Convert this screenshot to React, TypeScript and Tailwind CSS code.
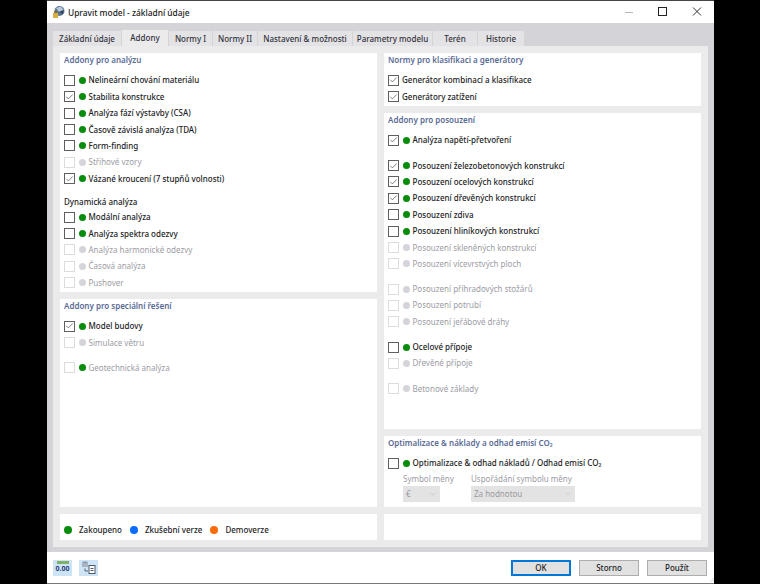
import { Check, ChevronDown } from 'lucide-react'

type Row = {
  label: React.ReactNode
  checked?: boolean
  off?: boolean
  dot?: 'green' | 'gray'
  gap?: boolean
}

const analysis: Row[] = [
  { label: 'Nelineární chování materiálu' },
  { label: 'Stabilita konstrukce', checked: true },
  { label: 'Analýza fází výstavby (CSA)' },
  { label: 'Časově závislá analýza (TDA)' },
  { label: 'Form-finding' },
  { label: 'Střihové vzory', off: true },
  { label: 'Vázané kroucení (7 stupňů volnosti)', checked: true },
]

const dynamic: Row[] = [
  { label: 'Modální analýza' },
  { label: 'Analýza spektra odezvy' },
  { label: 'Analýza harmonické odezvy', off: true },
  { label: 'Časová analýza', off: true },
  { label: 'Pushover', off: true },
]

const special: Row[] = [
  { label: 'Model budovy', checked: true },
  { label: 'Simulace větru', off: true },
  { label: 'Geotechnická analýza', off: true, dot: 'green', gap: true },
]

const design: Row[] = [
  { label: 'Analýza napětí-přetvoření', checked: true },
  { label: 'Posouzení železobetonových konstrukcí', checked: true, gap: true },
  { label: 'Posouzení ocelových konstrukcí', checked: true },
  { label: 'Posouzení dřevěných konstrukcí', checked: true },
  { label: 'Posouzení zdiva' },
  { label: 'Posouzení hliníkových konstrukcí' },
  { label: 'Posouzení skleněných konstrukcí', off: true },
  { label: 'Posouzení vícevrstvých ploch', off: true },
  { label: 'Posouzení příhradových stožárů', off: true, gap: true },
  { label: 'Posouzení potrubí', off: true },
  { label: 'Posouzení jeřábové dráhy', off: true },
  { label: 'Ocelové přípoje', gap: true },
  { label: 'Dřevěné přípoje', off: true },
  { label: 'Betonové základy', off: true, gap: true },
]

const tabs = [
  { label: 'Základní údaje', width: 'w-[68px]' },
  { label: 'Addony', width: 'w-[46px]', active: true },
  { label: 'Normy I', width: 'w-[43px]' },
  { label: 'Normy II', width: 'w-[44px]' },
  { label: 'Nastavení & možnosti', width: 'w-[94px]' },
  { label: 'Parametry modelu', width: 'w-[79px]' },
  { label: 'Terén', width: 'w-[44px]' },
  { label: 'Historie', width: 'w-[46px]' },
]

function CheckBox({ checked, off }: { checked?: boolean; off?: boolean }) {
  return (
    <span
      className={`flex h-[11px] w-[11px] shrink-0 items-center justify-center border bg-white ${
        off ? 'border-[#dcdcdc]' : 'border-[#5f5f5f]'
      }`}
    >
      {checked && <Check className="h-[10px] w-[10px] text-[#444]" strokeWidth={1.8} />}
    </span>
  )
}

function AddonRow({ row }: { row: Row }) {
  const dot = row.dot ?? (row.off ? 'gray' : 'green')
  return (
    <div className={`flex h-[16.4px] items-center ${row.gap ? 'mt-[8.8px]' : ''}`}>
      <CheckBox checked={row.checked} off={row.off} />
      <span
        className={`ml-[3.5px] h-[7px] w-[7px] shrink-0 rounded-full ${
          dot === 'green' ? 'bg-[#078c0c]' : 'bg-[#d4d4da]'
        }`}
      />
      <span className={`ml-[3px] whitespace-nowrap ${row.off ? 'text-[#9c9ca4]' : 'font-medium text-[#1c1c24]'}`}>
        {row.label}
      </span>
    </div>
  )
}

function CheckRow({ label }: { label: string }) {
  return (
    <div className="flex h-[16.4px] items-center">
      <CheckBox checked />
      <span className="ml-[3px] whitespace-nowrap font-medium text-[#1c1c24]">{label}</span>
    </div>
  )
}

function Heading({ children }: { children: React.ReactNode }) {
  return <div className="mb-[6.2px] h-[13px] font-semibold leading-[13px] text-[#5a6b96]">{children}</div>
}

function Card({ className, children }: { className?: string; children?: React.ReactNode }) {
  return <div className={`bg-white px-[4px] ${className ?? ''}`}>{children}</div>
}

function Select({ value, className }: { value: string; className: string }) {
  return (
    <div className={`flex h-[16px] items-center justify-between bg-[#e3e3e3] pl-[3px] pr-[2px] text-[#9a9aa0] ${className}`}>
      <span>{value}</span>
      <ChevronDown className="h-[10px] w-[10px] text-[#b9b9bd]" strokeWidth={1.2} />
    </div>
  )
}

function LegendItem({ color, label, className }: { color: string; label: string; className: string }) {
  return (
    <div className={`flex items-center ${className}`}>
      <span className={`h-[8px] w-[8px] rounded-full ${color}`} />
      <span className="ml-[7px] font-medium text-[#1c1c24]">{label}</span>
    </div>
  )
}

function Logo() {
  return (
    <svg width="13" height="14" viewBox="0 0 13 14">
      <circle cx="7.5" cy="6" r="5" fill="#5c7593" />
      <path d="M4 3 L9 1.5 L11.5 5 L7 7 Z" fill="#b8c8da" />
      <path d="M7 7 L11.5 5 L11 9 Z" fill="#33445e" />
      <path d="M1 8 H6 V13 H1 Z" fill="#d8ae3c" />
      <path d="M2.5 8 V6.5 H4.5 V8" fill="none" stroke="#8a6a1c" />
    </svg>
  )
}

function WindowControls() {
  return (
    <div className="flex items-center">
      <svg width="34" height="12" viewBox="0 0 34 12" className="mr-[-1px]">
        <path d="M0 6.5 H8" stroke="#b4b4b4" />
      </svg>
      <svg width="34" height="12" viewBox="0 0 34 12">
        <rect x="0.5" y="1.5" width="8" height="8" fill="none" stroke="#222" />
      </svg>
      <svg width="10" height="12" viewBox="0 0 10 12">
        <path d="M1 1.5 L9 9.5 M9 1.5 L1 9.5" stroke="#333" />
      </svg>
    </div>
  )
}

function DecimalsIcon() {
  return (
    <div className="flex h-[16px] w-[19px] flex-col items-center bg-[#cde4f7] pt-[1px]">
      <div className="h-[3px] w-[12px] bg-[#7fb069]" />
      <span className="mt-[1px] text-[7px] font-bold leading-[8px] text-[#2b3f73]">0.00</span>
    </div>
  )
}

function CopyIcon() {
  return (
    <div className="flex h-[16px] w-[19px] items-center justify-center bg-[#cde4f7]">
      <svg width="15" height="13" viewBox="0 0 15 13">
        <ellipse cx="4" cy="2" rx="3" ry="1.4" fill="#8b98a8" />
        <rect x="1" y="2" width="6" height="4" fill="#a9b4c1" />
        <path d="M4 7.5 V10 H7" fill="none" stroke="#5a6572" />
        <rect x="8" y="4.5" width="6" height="8" fill="#fff" stroke="#4e5966" />
        <path d="M9.5 7.5 H12.5 M9.5 9.5 H12.5" stroke="#4e5966" />
      </svg>
    </div>
  )
}

function DialogButton({ label, primary }: { label: string; primary?: boolean }) {
  return (
    <button
      className={`h-[16px] w-[60px] bg-[#e1e1e1] font-medium text-[#1c1c24] ${
        primary ? 'border-2 border-[#0078d7]' : 'border border-[#adadad]'
      }`}
    >
      {label}
    </button>
  )
}

export default function App() {
  return (
    <div className="flex h-[584px] w-[760px] overflow-hidden bg-black font-['Noto_Sans',sans-serif] text-[8px]">
      <div className="ml-[47px] flex h-[584px] w-[667px] flex-col border-t border-b border-t-[#444] border-b-[#777] bg-white">
        <div className="flex h-[22px] shrink-0 items-center pl-[5px] pr-[12px]">
          <Logo />
          <span className="ml-[3px] mt-[2px] text-[8.4px] font-medium text-[#222]">Upravit model - základní údaje</span>
          <div className="ml-auto">
            <WindowControls />
          </div>
        </div>

        <div className="flex h-[529px] shrink-0 flex-col bg-[#d3d3d8] px-[6px] pb-[6px] pt-[7px]">
          <div className="flex h-[16px] shrink-0 items-end gap-px">
            {tabs.map((tab) => (
              <div
                key={tab.label}
                className={`flex items-center justify-center whitespace-nowrap font-medium text-[#33333b] ${tab.width} ${
                  tab.active ? 'h-[16px] bg-[#ebebeb]' : 'h-[15px] bg-[#e3e3e6]'
                }`}
              >
                {tab.label}
              </div>
            ))}
          </div>

          <div className="grid flex-1 grid-cols-[317px_317px] gap-x-[7px] bg-[#ebebeb] p-[7px]">
            <div className="flex flex-col gap-[7px]">
              <Card className="h-[239px]">
                <Heading>Addony pro analýzu</Heading>
                {analysis.map((row, i) => (
                  <AddonRow key={i} row={row} />
                ))}
                <div className="mt-[9.5px] h-[12.6px] font-medium leading-[12px] text-[#1c1c24]">Dynamická analýza</div>
                {dynamic.map((row, i) => (
                  <AddonRow key={i} row={row} />
                ))}
              </Card>
              <Card className="h-[208px]">
                <Heading>Addony pro speciální řešení</Heading>
                {special.map((row, i) => (
                  <AddonRow key={i} row={row} />
                ))}
              </Card>
              <Card className="flex h-[26px] items-center pt-[6px]">
                <LegendItem color="bg-[#078c0c]" label="Zakoupeno" className="" />
                <LegendItem color="bg-[#0a6cff]" label="Zkušební verze" className="ml-[8px]" />
                <LegendItem color="bg-[#fb6a0a]" label="Demoverze" className="ml-[8px]" />
              </Card>
            </div>

            <div className="flex flex-col gap-[7px]">
              <Card className="h-[53px]">
                <Heading>Normy pro klasifikaci a generátory</Heading>
                <CheckRow label="Generátor kombinací a klasifikace" />
                <CheckRow label="Generátory zatížení" />
              </Card>
              <Card className="h-[316px]">
                <Heading>Addony pro posouzení</Heading>
                {design.map((row, i) => (
                  <AddonRow key={i} row={row} />
                ))}
              </Card>
              <Card className="h-[71px]">
                <Heading>Optimalizace & náklady a odhad emisí CO₂</Heading>
                <AddonRow row={{ label: 'Optimalizace & odhad nákladů / Odhad emisí CO₂' }} />
                <div className="ml-[15px] flex">
                  <div className="w-[68px]">
                    <div className="h-[14px] leading-[14px] text-[#9c9ca4]">Symbol měny</div>
                    <Select value="€" className="w-[37px]" />
                  </div>
                  <div>
                    <div className="h-[14px] leading-[14px] text-[#9c9ca4]">Uspořádání symbolu měny</div>
                    <Select value="Za hodnotou" className="w-[104px]" />
                  </div>
                </div>
              </Card>
              <Card className="h-[26px]" />
            </div>
          </div>
        </div>

        <div className="relative flex flex-1 items-center gap-[7px] pl-[6px] pr-[7px]">
          <DecimalsIcon />
          <CopyIcon />
          <div className="ml-auto mt-[1px] flex gap-[8px]">
            <DialogButton label="OK" primary />
            <DialogButton label="Storno" />
            <DialogButton label="Použít" />
          </div>
          <svg width="5" height="5" viewBox="0 0 5 5" className="absolute bottom-0 right-0">
            <path d="M3.5 0.5 h1 v1 h-1 Z M1.5 2.5 h1 v1 h-1 Z M3.5 2.5 h1 v1 h-1 Z" fill="#b8b8b8" />
          </svg>
        </div>
      </div>
    </div>
  )
}
